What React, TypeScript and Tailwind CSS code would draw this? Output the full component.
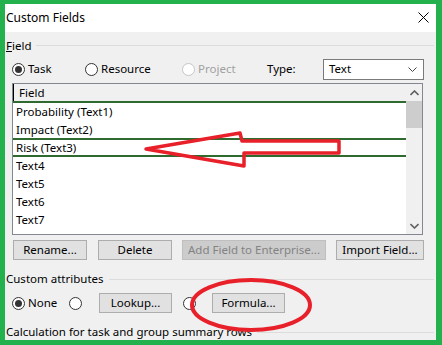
import React from "react";

const font = { fontFamily: '"Noto Sans", "Open Sans", Arial, sans-serif' };

function Radio({ checked = false, disabled = false }: { checked?: boolean; disabled?: boolean }) {
  return (
    <span
      className={`flex h-[13px] w-[13px] shrink-0 items-center justify-center rounded-full border bg-white ${
        disabled ? "border-[#c6c6c6]" : "border-[#333333]"
      }`}
    >
      {checked && <span className="h-[7px] w-[7px] rounded-full bg-[#333333]" />}
    </span>
  );
}

function Btn({ label, w, disabled = false }: { label: string; w: string; disabled?: boolean }) {
  return (
    <div
      className={`flex h-[20px] shrink-0 items-center justify-center overflow-hidden whitespace-nowrap border text-[11.5px] ${w} ${
        disabled ? "border-[#bfbfbf] bg-[#cccccc] text-[#838383]" : "border-[#adadad] bg-[#e1e1e1] text-black"
      }`}
    >
      {label}
    </div>
  );
}

export default function App() {
  const rows = ["Text4", "Text5", "Text6", "Text7", "Text8"];

  return (
    <div className="h-[345px] w-[442px] overflow-hidden bg-[#22b14c] pb-[5px] pl-[5px] pr-[6px] pt-[4px]" style={font}>
      <div className="relative h-full w-full overflow-hidden bg-[#f0f0f0] text-[11.5px] text-black">
        {/* Title bar */}
        <div className="flex h-[28px] items-center justify-between bg-white pb-[1px] pl-[1px] pr-[7px]">
          <span className="text-[12px]">Custom Fields</span>
          <svg width="11" height="11" viewBox="0 0 11 11">
            <path d="M0.5 0.5 L10.5 10.5 M10.5 0.5 L0.5 10.5" stroke="#000" strokeWidth="1" />
          </svg>
        </div>

        {/* Field group */}
        <div className="flex h-[27px] items-center pl-[1px] pr-[2px]">
          <span>
            <span className="underline">F</span>ield
          </span>
          <div className="ml-[5px] h-px flex-1 bg-[#dcdcdc]" />
        </div>

        <div className="flex h-[20px] items-center">
          <div className="ml-[7px] flex w-[73px] items-center gap-[3px]">
            <Radio checked />
            <span>Task</span>
          </div>
          <div className="flex w-[97px] items-center gap-[3px]">
            <Radio />
            <span>Resource</span>
          </div>
          <div className="flex w-[85px] items-center gap-[3px]">
            <Radio disabled />
            <span className="text-[#a0a0a0]">Project</span>
          </div>
          <span className="w-[56px]">Type:</span>
          <div className="flex h-[21px] w-[101px] items-center justify-between border border-[#7a7a7a] bg-white pl-[5px] pr-[6px]">
            <span>Text</span>
            <svg width="9" height="5" viewBox="0 0 9 5">
              <path d="M0.5 0.5 L4.5 4.5 L8.5 0.5" stroke="#444" strokeWidth="1" fill="none" />
            </svg>
          </div>
        </div>

        {/* Field list */}
        <div className="ml-[7px] mt-[4px] flex h-[152px] w-[411px] border border-[#828790] bg-white">
          <div className="flex-1 overflow-hidden">
            <div className="flex h-[19px] items-center border-b-2 border-[#2f6b2f] bg-[#f0f0f0]">
              <span className="h-full w-px bg-black" />
              <span className="pl-[5px]">Field</span>
            </div>
            <div className="flex h-[18px] items-center pl-[3px]">Probability (Text1)</div>
            <div className="flex h-[17px] items-center pl-[3px]">Impact (Text2)</div>
            <div className="flex h-[19px] items-center border-y-2 border-[#2f6b2f] pl-[3px]">Risk (Text3)</div>
            {rows.map((r) => (
              <div key={r} className="flex h-[18px] items-center pl-[3px]">
                {r}
              </div>
            ))}
          </div>
          <div className="flex w-[16px] flex-col bg-[#f0f0f0]">
            <div className="flex h-[17px] items-center justify-center">
              <svg width="9" height="6" viewBox="0 0 9 6">
                <path d="M0.5 5 L4.5 1 L8.5 5" stroke="#606060" strokeWidth="1.6" fill="none" />
              </svg>
            </div>
            <div className="h-[27px] bg-[#cdcdcd]" />
            <div className="flex-1" />
            <div className="flex h-[17px] items-center justify-center">
              <svg width="9" height="6" viewBox="0 0 9 6">
                <path d="M0.5 1 L4.5 5 L8.5 1" stroke="#606060" strokeWidth="1.6" fill="none" />
              </svg>
            </div>
          </div>
        </div>

        {/* Buttons */}
        <div className="mt-[5px] flex">
          <div className="ml-[8px]">
            <Btn label="Rename..." w="w-[74px]" />
          </div>
          <div className="ml-[11px]">
            <Btn label="Delete" w="w-[74px]" />
          </div>
          <div className="ml-[10px]">
            <Btn label="Add Field to Enterprise..." w="w-[144px]" disabled />
          </div>
          <div className="ml-[10px]">
            <Btn label="Import Field..." w="w-[88px]" />
          </div>
        </div>

        {/* Custom attributes */}
        <div className="mt-[9px] flex h-[20px] items-center pl-[1px] pr-[2px]">
          <span>Custom attributes</span>
          <div className="ml-[5px] h-px flex-1 bg-[#dcdcdc]" />
        </div>

        <div className="mt-[4px] flex h-[20px] items-center">
          <div className="ml-[7px] flex w-[57px] items-center gap-[3px]">
            <Radio checked />
            <span>None</span>
          </div>
          <div className="w-[30px]">
            <Radio />
          </div>
          <Btn label="Lookup..." w="w-[73px]" />
          <div className="ml-[11px] w-[29px]">
            <Radio />
          </div>
          <Btn label="Formula..." w="w-[73px]" />
        </div>

        <div className="mt-[9px] flex h-[20px] items-center pl-[1px] pr-[2px]">
          <span>Calculation for task and group summary rows</span>
          <div className="ml-[5px] h-px flex-1 bg-[#dcdcdc]" />
        </div>

        {/* Red annotations */}
        <svg className="pointer-events-none absolute left-0 top-0" width="431" height="336" viewBox="0 0 431 336">
          <path
            d="M141 145 L235 129 L237 137 L334 137 L334 149 L239 149 L239 162 Z"
            fill="none"
            stroke="#e8202a"
            strokeWidth="3.5"
            strokeLinejoin="round"
          />
          <ellipse cx="246" cy="301" rx="59" ry="25" fill="none" stroke="#e8202a" strokeWidth="4" />
        </svg>
      </div>
    </div>
  );
}
